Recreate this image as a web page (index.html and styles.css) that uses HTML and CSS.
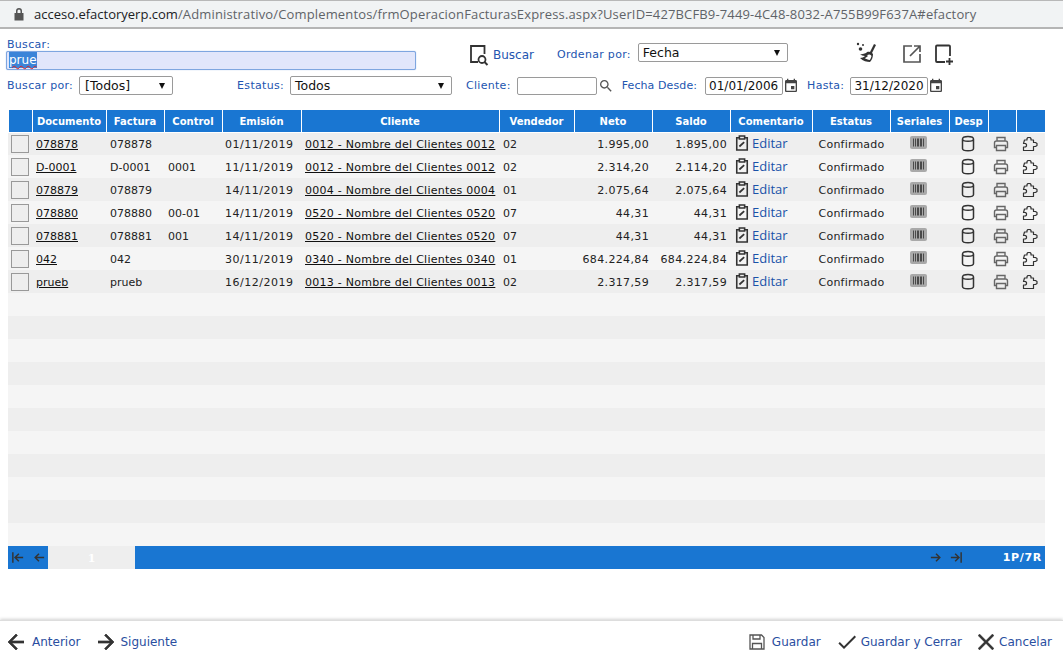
FILE: index.html
```html
<!DOCTYPE html>
<html lang="es">
<head>
<meta charset="utf-8">
<title>Facturas Express</title>
<link rel="stylesheet" href="styles.css">
</head>
<body>
<svg class="defs" width="0" height="0" aria-hidden="true">
  <symbol id="i-event" viewBox="0 0 24 24"><path d="M17 12h-5v5h5v-5zM16 1v2H8V1H6v2H5c-1.11 0-1.99.9-1.99 2L3 19c0 1.1.89 2 2 2h14c1.1 0 2-.9 2-2V5c0-1.1-.9-2-2-2h-1V1h-2zm3 18H5V8h14v11z"/></symbol>
  <symbol id="i-search" viewBox="0 0 24 24"><path d="M15.5 14h-.79l-.28-.27C15.41 12.59 16 11.11 16 9.5 16 5.91 13.09 3 9.5 3S3 5.91 3 9.5 5.91 16 9.5 16c1.61 0 3.09-.59 4.23-1.57l.27.28v.79l5 4.99L20.49 19l-4.99-5zm-6 0C7.01 14 5 11.99 5 9.5S7.01 5 9.5 5 14 7.01 14 9.5 11.99 14 9.5 14z"/></symbol>
  <symbol id="i-clip" viewBox="0 0 16 18"><path fill="none" stroke="currentColor" stroke-width="1.8" d="M5 3H2v14h12V3H11M5 1h6v3.500H5z"/><path fill="none" stroke="currentColor" stroke-width="2" d="M5 13l5.500-5"/></symbol>
  <symbol id="i-barcode" viewBox="0 0 17 13"><rect x="0" y="0" width="17" height="13" rx="2" fill="#a9a9a9"/><path stroke="#4a4a4a" stroke-width="1" d="M3.5 2.5v8M5.5 2.5v8M7.5 2.5v8M8.5 2.5v8M10.5 2.5v8M11.5 2.5v8M13.5 2.5v8"/></symbol>
  <symbol id="i-db" viewBox="0 0 14 17"><path fill="none" stroke="currentColor" stroke-width="1.5" d="M1.5 4c0-3.5 11-3.5 11 0v9.500c0 3-11 3-11 0zM1.500 4c0 3 11 3 11 0"/></symbol>
  <symbol id="i-print" viewBox="0 0 16 16"><path fill="none" stroke="currentColor" stroke-width="1.400" d="M4 5V1.500h8V5M3.500 11.500H1.500V7c0-1.200.8-2 2-2h9c1.200 0 2 .8 2 2v4.500h-2M3.500 9.500h9v5h-9z"/></symbol>
  <symbol id="i-puzzle" viewBox="0 0 16 16"><path fill="none" stroke="currentColor" stroke-width="1.200" stroke-linejoin="round" d="M2.500 4H5V2.500L6 1.500H8L9 2.500V4H11.500V6.500H13.500L15 7.500V9.500L13.500 10.500H11.500V14.500H1.500V11H3.500L4.500 10V8.500L3.500 7.500H1.500Z"/></symbol>
</svg>

<header class="urlbar">
  <svg class="lock" viewBox="0 0 12 14" width="12" height="14"><path d="M3 6V4a3 3 0 0 1 6 0v2h1.500v7.500h-9V6zM4.500 6h3V4a1.500 1.500 0 0 0-3 0z"/></svg>
  <span class="url"><span class="host">acceso.efactoryerp.com</span>/Administrativo/Complementos/frmOperacionFacturasExpress.aspx?UserID=427BCFB9-7449-4C48-8032-A755B99F637A#efactory</span>
</header>

<main class="main">
  <section class="filters">
    <div class="row-top">
      <div class="search-field">
        <label class="label">Buscar:</label>
        <div class="search-input"><span class="selected">prue</span></div>
      </div>
      <svg class="ic-find" viewBox="0 0 20 22" width="20" height="22"><path fill="none" stroke="#333" stroke-width="1.800" d="M9 18H2V2h13.500v8"/><circle cx="13" cy="15.500" r="3.500" fill="none" stroke="#333" stroke-width="1.800"/><path stroke="#333" stroke-width="2" d="M15.500 18l3 3"/></svg>
      <a class="label link-buscar">Buscar</a>
      <label class="label lbl-ordenar">Ordenar por:</label>
      <div class="select sel-orden">Fecha</div>
      <svg class="ic-broom" viewBox="0 0 22 22" width="22" height="22"><path fill="#333" d="M14 10l4-8 2 1-4 8 1 1c0 3-1 6-3 8-3 0-7-1-10-4 2 0 4-1 5-2-2 0-4-1-5-2 2 .500 4 0 6-1 1-1 2-1.500 4-1z"/><path fill="#fff" d="M13.500 12.500c1 .3 1.500.8 2 1.500-.3 1.500-1 3-1.800 4-1.700-.2-3.700-1-5-1.900 1.500-.6 2.800-1.400 3.300-2.400-.5 0-1 0-1.500-.1 1-.6 2-1 3-1.100z"/><circle cx="2" cy="2" r="1.200" fill="#333"/><circle cx="7" cy="3" r="1" fill="#333"/><circle cx="4.500" cy="7" r="1.800" fill="#333"/></svg>
      <svg class="ic-open" viewBox="2 2 20 20" width="20" height="20"><path fill="none" stroke="#555" stroke-width="1.700" d="M12 4H4v16h16v-8M14 4h6v6M20 4L10 14"/></svg>
      <svg class="ic-new" viewBox="0 0 20 22" width="20" height="22"><path fill="none" stroke="#333" stroke-width="1.800" d="M11 18H3c-.6 0-1-.4-1-1V2.500c0-.6.4-1 1-1h12c.6 0 1 .4 1 1V12"/><path stroke="#333" stroke-width="1.800" d="M15.500 14v7M12 17.500h7"/></svg>
    </div>
    <div class="row-bottom">
      <label class="label">Buscar por:</label>
      <div class="select sel-por">[Todos]</div>
      <label class="label lbl-estatus">Estatus:</label>
      <div class="select sel-estatus">Todos</div>
      <label class="label lbl-cliente">Cliente:</label>
      <div class="box box-cliente"></div>
      <svg class="ic-mini" width="16" height="16"><use href="#i-search"/></svg>
      <label class="label lbl-desde">Fecha Desde:</label>
      <div class="box box-date">01/01/2006</div>
      <svg class="ic-cal" width="16" height="16"><use href="#i-event"/></svg>
      <label class="label lbl-hasta">Hasta:</label>
      <div class="box box-date box-date-to">31/12/2020</div>
      <svg class="ic-cal" width="16" height="16"><use href="#i-event"/></svg>
    </div>
  </section>

  <section class="grid-wrap">
    <table class="grid">
      <colgroup>
        <col class="c-chk"><col class="c-doc"><col class="c-fac"><col class="c-ctl"><col class="c-emi"><col class="c-cli"><col class="c-ven"><col class="c-net"><col class="c-sal"><col class="c-com"><col class="c-est"><col class="c-ser"><col class="c-des"><col class="c-pri"><col class="c-puz">
      </colgroup>
      <thead>
        <tr><th></th><th>Documento</th><th>Factura</th><th>Control</th><th>Emisión</th><th>Cliente</th><th>Vendedor</th><th>Neto</th><th>Saldo</th><th>Comentario</th><th>Estatus</th><th>Seriales</th><th>Desp</th><th></th><th></th></tr>
      </thead>
      <tbody>
        <tr><td><span class="chk"></span></td><td><a class="lnk">078878</a></td><td>078878</td><td></td><td class="date">01/11/2019</td><td><a class="lnk cli">0012 - Nombre del Clientes 0012</a></td><td>02</td><td class="num">1.995,00</td><td class="num">1.895,00</td><td class="cm"><svg class="ic-clip"><use href="#i-clip"/></svg><a class="edit">Editar</a></td><td class="ctr st">Confirmado</td><td class="ctr ico"><svg class="ic-bar"><use href="#i-barcode"/></svg></td><td class="ctr ico"><svg class="ic-db"><use href="#i-db"/></svg></td><td class="ctr ico"><svg class="ic-pr"><use href="#i-print"/></svg></td><td class="ctr ico"><svg class="ic-pz"><use href="#i-puzzle"/></svg></td></tr>
        <tr><td><span class="chk"></span></td><td><a class="lnk">D-0001</a></td><td>D-0001</td><td>0001</td><td class="date">11/11/2019</td><td><a class="lnk cli">0012 - Nombre del Clientes 0012</a></td><td>02</td><td class="num">2.314,20</td><td class="num">2.114,20</td><td class="cm"><svg class="ic-clip"><use href="#i-clip"/></svg><a class="edit">Editar</a></td><td class="ctr st">Confirmado</td><td class="ctr ico"><svg class="ic-bar"><use href="#i-barcode"/></svg></td><td class="ctr ico"><svg class="ic-db"><use href="#i-db"/></svg></td><td class="ctr ico"><svg class="ic-pr"><use href="#i-print"/></svg></td><td class="ctr ico"><svg class="ic-pz"><use href="#i-puzzle"/></svg></td></tr>
        <tr><td><span class="chk"></span></td><td><a class="lnk">078879</a></td><td>078879</td><td></td><td class="date">14/11/2019</td><td><a class="lnk cli">0004 - Nombre del Clientes 0004</a></td><td>01</td><td class="num">2.075,64</td><td class="num">2.075,64</td><td class="cm"><svg class="ic-clip"><use href="#i-clip"/></svg><a class="edit">Editar</a></td><td class="ctr st">Confirmado</td><td class="ctr ico"><svg class="ic-bar"><use href="#i-barcode"/></svg></td><td class="ctr ico"><svg class="ic-db"><use href="#i-db"/></svg></td><td class="ctr ico"><svg class="ic-pr"><use href="#i-print"/></svg></td><td class="ctr ico"><svg class="ic-pz"><use href="#i-puzzle"/></svg></td></tr>
        <tr><td><span class="chk"></span></td><td><a class="lnk">078880</a></td><td>078880</td><td>00-01</td><td class="date">14/11/2019</td><td><a class="lnk cli">0520 - Nombre del Clientes 0520</a></td><td>07</td><td class="num">44,31</td><td class="num">44,31</td><td class="cm"><svg class="ic-clip"><use href="#i-clip"/></svg><a class="edit">Editar</a></td><td class="ctr st">Confirmado</td><td class="ctr ico"><svg class="ic-bar"><use href="#i-barcode"/></svg></td><td class="ctr ico"><svg class="ic-db"><use href="#i-db"/></svg></td><td class="ctr ico"><svg class="ic-pr"><use href="#i-print"/></svg></td><td class="ctr ico"><svg class="ic-pz"><use href="#i-puzzle"/></svg></td></tr>
        <tr><td><span class="chk"></span></td><td><a class="lnk">078881</a></td><td>078881</td><td>001</td><td class="date">14/11/2019</td><td><a class="lnk cli">0520 - Nombre del Clientes 0520</a></td><td>07</td><td class="num">44,31</td><td class="num">44,31</td><td class="cm"><svg class="ic-clip"><use href="#i-clip"/></svg><a class="edit">Editar</a></td><td class="ctr st">Confirmado</td><td class="ctr ico"><svg class="ic-bar"><use href="#i-barcode"/></svg></td><td class="ctr ico"><svg class="ic-db"><use href="#i-db"/></svg></td><td class="ctr ico"><svg class="ic-pr"><use href="#i-print"/></svg></td><td class="ctr ico"><svg class="ic-pz"><use href="#i-puzzle"/></svg></td></tr>
        <tr><td><span class="chk"></span></td><td><a class="lnk">042</a></td><td>042</td><td></td><td class="date">30/11/2019</td><td><a class="lnk cli">0340 - Nombre del Clientes 0340</a></td><td>01</td><td class="num">684.224,84</td><td class="num">684.224,84</td><td class="cm"><svg class="ic-clip"><use href="#i-clip"/></svg><a class="edit">Editar</a></td><td class="ctr st">Confirmado</td><td class="ctr ico"><svg class="ic-bar"><use href="#i-barcode"/></svg></td><td class="ctr ico"><svg class="ic-db"><use href="#i-db"/></svg></td><td class="ctr ico"><svg class="ic-pr"><use href="#i-print"/></svg></td><td class="ctr ico"><svg class="ic-pz"><use href="#i-puzzle"/></svg></td></tr>
        <tr><td><span class="chk"></span></td><td><a class="lnk">prueb</a></td><td>prueb</td><td></td><td class="date">16/12/2019</td><td><a class="lnk cli">0013 - Nombre del Clientes 0013</a></td><td>02</td><td class="num">2.317,59</td><td class="num">2.317,59</td><td class="cm"><svg class="ic-clip"><use href="#i-clip"/></svg><a class="edit">Editar</a></td><td class="ctr st">Confirmado</td><td class="ctr ico"><svg class="ic-bar"><use href="#i-barcode"/></svg></td><td class="ctr ico"><svg class="ic-db"><use href="#i-db"/></svg></td><td class="ctr ico"><svg class="ic-pr"><use href="#i-print"/></svg></td><td class="ctr ico"><svg class="ic-pz"><use href="#i-puzzle"/></svg></td></tr>
        <tr class="empty"><td colspan="15"></td></tr>
        <tr class="empty"><td colspan="15"></td></tr>
        <tr class="empty"><td colspan="15"></td></tr>
        <tr class="empty"><td colspan="15"></td></tr>
        <tr class="empty"><td colspan="15"></td></tr>
        <tr class="empty"><td colspan="15"></td></tr>
        <tr class="empty"><td colspan="15"></td></tr>
        <tr class="empty"><td colspan="15"></td></tr>
        <tr class="empty"><td colspan="15"></td></tr>
        <tr class="empty"><td colspan="15"></td></tr>
        <tr class="empty"><td colspan="15"></td></tr>
      </tbody>
    </table>
    <div class="pager">
      <svg class="pg-ic first" viewBox="0 0 14 12" width="12" height="11"><path d="M1 0v12M13 6H4M8 1.500L3.500 6 8 10.500"/></svg>
      <svg class="pg-ic prev" viewBox="0 0 14 12" width="12" height="11"><path d="M13 6H3M7 1.500L2.500 6 7 10.500"/></svg>
      <div class="pg-num">1</div>
      <div class="pg-fill"></div>
      <svg class="pg-ic next" viewBox="0 0 14 12" width="12" height="11"><path d="M1 6h10M7 1.500L11.500 6 7 10.500"/></svg>
      <svg class="pg-ic last" viewBox="0 0 14 12" width="12" height="11"><path d="M13 0v12M1 6h9M6 1.500L10.500 6 6 10.500"/></svg>
      <div class="pg-info">1P/7R</div>
    </div>
  </section>
</main>

<footer class="footer">
  <svg class="ft-ic" viewBox="4 4 16 16" width="16" height="16"><path d="M20 11H7.830l5.590-5.590L12 4l-8 8 8 8 1.410-1.410L7.830 13H20v-2z"/></svg>
  <a class="ft-link ft-ant">Anterior</a>
  <svg class="ft-ic" viewBox="4 4 16 16" width="16" height="16"><path d="M12 4l-1.410 1.410L16.170 11H4v2h12.170l-5.580 5.590L12 20l8-8z"/></svg>
  <a class="ft-link ft-sig">Siguiente</a>
  <span class="ft-space"></span>
  <svg class="ft-save" viewBox="0 0 16 16" width="16" height="16"><path fill="none" stroke="#555" stroke-width="1.300" d="M1 1h11.500L15 3.500V15H1zM4 1v4h7V1M3.500 15V9.500h9V15"/></svg>
  <a class="ft-link ft-guardar">Guardar</a>
  <svg class="ft-ic ft-check" viewBox="3 5 18 14" width="18" height="14"><path d="M9 16.170L4.830 12l-1.420 1.410L9 19 21 7l-1.410-1.410z"/></svg>
  <a class="ft-link ft-gc">Guardar y Cerrar</a>
  <svg class="ft-ic ft-x" viewBox="5 5 14 14" width="16" height="16"><path d="M19 6.410L17.590 5 12 10.590 6.410 5 5 6.410 10.590 12 5 17.590 6.410 19 12 13.410 17.590 19 19 17.590 13.410 12z"/></svg>
  <a class="ft-link ft-can">Cancelar</a>
</footer>
</body>
</html>
```

FILE: styles.css
```css
* { box-sizing: border-box; }
html, body { margin: 0; padding: 0; }
body {
  width: 1063px;
  height: 660px;
  overflow: hidden;
  display: flex;
  flex-direction: column;
  background: #fff;
  color: #222;
  font: 11px "DejaVu Sans", Verdana, sans-serif;
}
.defs { position: absolute; }

.urlbar {
  height: 29px;
  flex: none;
  display: flex;
  align-items: center;
  padding-left: 13px;
  background: #f1f3f4;
  border-top: 1px solid #b8b8b8;
  border-bottom: 2px solid #b5b5b5;
  font: 13px "Open Sans", "Liberation Sans", sans-serif;
  color: #5f6368;
  letter-spacing: .15px;
}
.lock { fill: #555; margin-right: 9px; }
.host { color: #202124; letter-spacing: 0; }

.main { flex: 1; min-height: 0; }

.filters { height: 81px; padding: 9px 0 0 7px; }
.label { color: #2255b0; white-space: nowrap; letter-spacing: .3px; }
.row-top { display: flex; align-items: flex-start; height: 38px; }
.search-field { width: 410px; margin-left: -1px; }
.search-field .label { display: block; padding-left: 1px; line-height: 13px; }
.search-input {
  height: 19px;
  background: #e1e6fb;
  border: 1px solid #7ea6e0;
  box-shadow: 0 0 1px #7ea6e0;
  border-radius: 2px;
  padding-left: 2px;
  font-size: 12px;
  line-height: 17px;
  color: #222;
}
.selected {
  display: inline-block;
  background: #3b84d8;
  color: #fff;
  height: 16px;
  line-height: 16px;
  text-decoration: underline wavy #d22 1px;
}
.ic-find { margin: 6px 0 0 53px; flex: none; }
.link-buscar { margin: 10px 0 0 4px; font-size: 12px; letter-spacing: 0; }
.lbl-ordenar { margin: 10px 0 0 23px; }
.select {
  position: relative;
  height: 19px;
  background: #fff;
  border: 1px solid #9a9a9a;
  border-radius: 2px;
  font-size: 12.500px;
  line-height: 17px;
  padding-left: 5px;
  color: #111;
  flex: none;
}
.select::after {
  content: "";
  position: absolute;
  right: 7px;
  top: 6px;
  border-left: 3.500px solid transparent;
  border-right: 3.500px solid transparent;
  border-top: 6px solid #111;
}
.sel-orden { width: 150px; margin: 5px 0 0 7px; padding-left: 4px; }
.ic-broom { margin: 4px 0 0 68px; flex: none; }
.ic-open { margin: 6px 0 0 24px; flex: none; }
.ic-new { margin: 6px 0 0 12px; flex: none; }

.row-bottom { display: flex; align-items: center; height: 19px; margin-top: 0; }
.sel-por { width: 94px; margin-left: 6px; }
.lbl-estatus { margin-left: 64px; }
.sel-estatus { width: 162px; margin-left: 6px; padding-left: 4px; }
.lbl-cliente { margin-left: 14px; }
.box {
  height: 18px;
  background: #fff;
  border: 1px solid #9a9a9a;
  border-radius: 2px;
  flex: none;
  font-size: 12px;
  line-height: 16px;
  padding-left: 3px;
  color: #111;
}
.box-cliente { width: 80px; margin-left: 6px; }
.ic-mini { fill: #555; margin-left: 1px; flex: none; }
.lbl-desde { margin-left: 8px; letter-spacing: .1px; }
.box-date { width: 78px; margin-left: 8px; }
.box-date-to { margin-left: 6px; }
.ic-cal { fill: #444; flex: none; }
.lbl-hasta { margin-left: 8px; }

.grid-wrap { margin: 0 18px 0 8px; }
.grid {
  width: 1037px;
  table-layout: fixed;
  border-collapse: collapse;
  font-size: 11px;
}
.c-chk { width: 24px; } .c-doc { width: 74px; } .c-fac { width: 58px; } .c-ctl { width: 58px; }
.c-emi { width: 79px; } .c-cli { width: 198px; } .c-ven { width: 75px; } .c-net { width: 78px; }
.c-sal { width: 78px; } .c-com { width: 82px; } .c-est { width: 78px; } .c-ser { width: 59px; }
.c-des { width: 39px; } .c-pri { width: 28px; } .c-puz { width: 29px; }

.grid th {
  height: 22px;
  padding: 1px 0 0;
  background: #1976d2;
  color: #fff;
  font-size: 10px;
  font-weight: bold;
  border-right: 1px solid #fff;
  border-left: 1px solid #fff;
  border-bottom: 1px solid #fff;
}
.grid th:first-child { border-left: 0; box-shadow: inset 1px 0 #fff; }
.grid th:last-child { border-right: 0; }
.grid td { height: 23px; padding: 1px 3px 0 4px; white-space: nowrap; color: #222; }
.grid tbody tr:nth-child(odd) { background: #eee; }
.grid tbody tr:nth-child(even) { background: #f5f5f5; }
.grid td:first-child { padding: 0 0 0 3px; }
.grid td.cm { padding-top: 0; }
.grid td.ico { padding: 0 5px 0 3px; }
.ctr { text-align: center; }
.grid td.date { padding-left: 3px; letter-spacing: .5px; }
.num { text-align: right; letter-spacing: .35px; }
.st { letter-spacing: .2px; }
.lnk { color: #111; text-decoration: underline; }
.cli { letter-spacing: .26px; }
.edit { color: #1a52a8; font: 13px "Open Sans", "Liberation Sans", sans-serif; vertical-align: 2px; }
.chk {
  display: block;
  width: 18px;
  height: 18px;
  border: 1px solid #999;
  background: #eee;
}
.ic-clip { width: 14px; height: 16px; margin: 0 3px 0 1px; color: #333; vertical-align: -1px; }
.ic-bar { width: 17px; height: 13px; vertical-align: -1px; }
.ic-db { width: 14px; height: 17px; color: #333; vertical-align: -4px; }
.ic-pr { width: 16px; height: 16px; color: #666; vertical-align: -3px; }
.ic-pz { width: 16px; height: 16px; color: #333; vertical-align: -3px; }

.pager {
  height: 23px;
  display: flex;
  align-items: center;
  background: #1976d2;
  color: #fff;
}
.pg-ic { fill: none; stroke: #333; stroke-width: 1.700; flex: none; }
.first { margin-left: 4px; }
.prev { margin-left: 9px; }
.pg-num {
  width: 87px;
  height: 23px;
  margin-left: 3px;
  background: #eee;
  color: #fff;
  text-align: center;
  font: bold 11px/25px "DejaVu Serif", serif;
}
.pg-fill { flex: 1; }
.next { margin-right: 8px; }
.pg-info { width: 83px; font-weight: bold; text-align: right; padding-right: 3px; letter-spacing: .7px; }

.footer {
  height: 40px;
  flex: none;
  display: flex;
  align-items: center;
  padding: 2px 11px 0 8px;
  border-top: 1px solid #ddd;
  box-shadow: 0 -1px 3px rgba(0,0,0,.18);
  font-size: 12px;
}
.ft-ic { fill: #333; stroke: #333; stroke-width: .7px; flex: none; }
.ft-link { color: #2a4ea0; white-space: nowrap; }
.ft-ant { margin: 0 18px 0 8px; }
.ft-sig { margin-left: 6px; }
.ft-space { flex: 1; }
.ft-save { flex: none; }
.ft-guardar { margin: 0 17px 0 7px; }
.ft-check { stroke-width: 0; }
.ft-gc { margin: 0 16px 0 5px; }
.ft-x { stroke-width: .3px; }
.ft-can { margin-left: 5px; }
```
